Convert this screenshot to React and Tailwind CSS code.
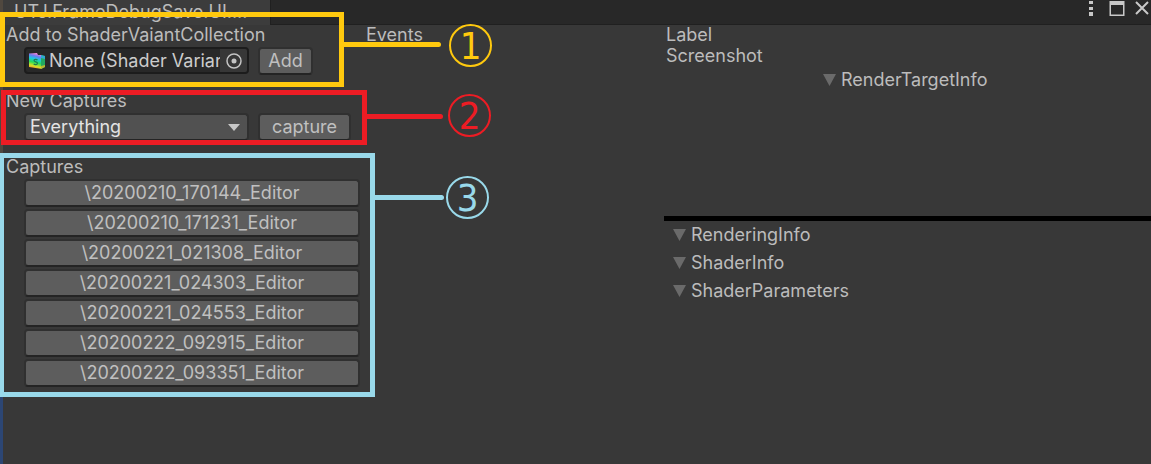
import { useState } from "react";

const captures = [
  "\\20200210_170144_Editor",
  "\\20200210_171231_Editor",
  "\\20200221_021308_Editor",
  "\\20200221_024303_Editor",
  "\\20200221_024553_Editor",
  "\\20200222_092915_Editor",
  "\\20200222_093351_Editor",
];

const buttonClass =
  "h-7 rounded border-2 border-[#303030] border-b-[#242424] bg-[#5d5d5d] text-center leading-6 text-[#c0c0c0] hover:bg-[#676767]";

function Foldout({ title, className = "" }) {
  const [open, setOpen] = useState(true);
  return (
    <button
      type="button"
      aria-expanded={open}
      onClick={() => setOpen(!open)}
      className={`flex h-5 items-center gap-[5px] ${className}`}
    >
      <svg
        viewBox="0 0 13 12"
        className={`h-3 w-[13px] fill-[#6a6a6a] ${open ? "" : "-rotate-90"}`}
        aria-hidden="true"
      >
        <path d="M0 0h13L6.5 12z" />
      </svg>
      {title}
    </button>
  );
}

function ShaderVariantIcon() {
  return (
    <svg viewBox="0 0 16 16" className="h-4 w-4 shrink-0" aria-hidden="true">
      <defs>
        <linearGradient id="spectrum" x1="0.6" y1="0" x2="0.4" y2="1">
          <stop offset="0.05" stopColor="#e884d8" />
          <stop offset="0.2" stopColor="#6b7cf0" />
          <stop offset="0.38" stopColor="#1cc8e0" />
          <stop offset="0.6" stopColor="#26dc58" />
          <stop offset="0.82" stopColor="#d8e028" />
          <stop offset="1" stopColor="#f08a28" />
        </linearGradient>
      </defs>
      <path d="M0 0.500l8-0.500 1 2 4 0v14l-13-2z" fill="url(#spectrum)" />
      <path d="M12 2l4 1v11l-4 2z" fill="#22a860" />
      <path d="M12 2l4 1v3l-4-1z" fill="#30a8d0" />
      <path d="M12 13l4-1v2l-4 2z" fill="#b8b830" />
      <path
        d="M8.500 7C7.500 6 5 6 5 7.500S8.500 8.700 8.500 10.200 6 12 4.700 11"
        fill="none"
        stroke="#1c8050"
        strokeWidth="1.200"
      />
    </svg>
  );
}

function Header() {
  return (
    <header className="flex h-[25px] justify-between border-b border-[#202020] bg-[#282828] pl-[3px]">
      <div className="-mb-px flex w-[268px] border-r border-[#202020] bg-[#3c3c3c] pl-[11px] leading-6">
        UTJ.FrameDebugSave.UI....
      </div>
      <div className="flex h-4 items-center text-[#c8c8c8]">
        <button type="button" aria-label="Menu" className="mr-4">
          <svg viewBox="0 0 4 16" className="h-4 w-1 fill-current">
            <path d="M0 1h4v3H0zM0 7h4v3H0zM0 12h4v4H0z" />
          </svg>
        </button>
        <button type="button" aria-label="Maximize" className="mr-[10px]">
          <svg viewBox="0 0 16 16" className="h-4 w-4 fill-current">
            <path fillRule="evenodd" d="M0.500 1h15v15h-15zM2 5v9.500h12V5z" />
          </svg>
        </button>
        <button type="button" aria-label="Close" className="mr-[2px]">
          <svg viewBox="0 0 14 16" className="h-4 w-[14px] stroke-current">
            <path d="M1 2l12 12M13 2L1 14" fill="none" strokeWidth="2" />
          </svg>
        </button>
      </div>
    </header>
  );
}

function Callout({ number, box, line, badge }) {
  return (
    <>
      <div className={`absolute border-[5px] border-current ${box}`} />
      <div className={`absolute h-[5px] rounded-r-sm bg-current ${line}`} />
      <div
        className={`absolute flex size-[43px] items-center justify-center rounded-full border-2 border-current font-['DejaVu_Sans_Condensed','DejaVu_Sans',sans-serif] text-[38px] leading-none ${badge}`}
      >
        {number}
      </div>
    </>
  );
}

export default function App() {
  return (
    <div className="relative flex min-h-screen flex-col overflow-hidden bg-[#383838] font-[Inter,sans-serif] text-lg leading-5 text-[#bcbcbc]">
      <Header />
      <div className="absolute top-0 left-0 h-full w-[3px] bg-linear-to-b from-[#50483f] from-85% to-[#2c4674] to-85%" />

      <main className="grid flex-1 grid-cols-[360px_304px_1fr]">
        <div className="flex flex-col gap-[17px] pl-[6px]">
          <section className="flex flex-col gap-[2px]">
            <label htmlFor="collection" className="whitespace-nowrap">
              Add to ShaderVaiantCollection
            </label>
            <div className="flex h-[27px] gap-[9px] pl-[18px]">
              <div className="flex w-[225px] items-center overflow-hidden rounded border-2 border-[#1c1c1c] bg-[#282828] pl-[3px]">
                <ShaderVariantIcon />
                <input
                  id="collection"
                  readOnly
                  value="None (Shader Variant Collection)"
                  className="ml-1 h-full min-w-0 flex-1 bg-transparent text-[#cccccc] outline-none"
                />
                <button
                  type="button"
                  aria-label="Select collection"
                  className="flex h-full w-[27px] items-center justify-center bg-[#373737]"
                >
                  <svg viewBox="0 0 16 16" className="h-4 w-4">
                    <circle cx="8" cy="8" r="7" fill="none" stroke="#c4c4c4" strokeWidth="1.500" />
                    <circle cx="8" cy="8" r="2.500" fill="#c4c4c4" />
                  </svg>
                </button>
              </div>
              <button type="button" className={`${buttonClass} w-[55px]`}>
                Add
              </button>
            </div>
          </section>

          <section className="flex flex-col gap-[2px]">
            <label htmlFor="capture-type">New Captures</label>
            <div className="flex h-[27px] gap-[9px] pl-[18px]">
              <div className="relative w-[225px]">
                <select
                  id="capture-type"
                  className="h-7 w-full appearance-none rounded border-2 border-[#303030] border-b-[#242424] bg-[#515151] pl-1 text-[#e4e4e4]"
                >
                  <option>Everything</option>
                </select>
                <svg
                  viewBox="0 0 12 7"
                  className="pointer-events-none absolute top-[11px] right-[9px] h-[7px] w-3 fill-[#c8c8c8]"
                  aria-hidden="true"
                >
                  <path d="M0 0h12L6 7z" />
                </svg>
              </div>
              <button type="button" className={`${buttonClass} w-[93px]`}>
                capture
              </button>
            </div>
          </section>

          <section>
            <h2>Captures</h2>
            <ul className="mt-[2px] flex flex-col gap-[2px] pl-[18px]">
              {captures.map((name) => (
                <li key={name} className="flex">
                  <button type="button" className={`${buttonClass} flex-1`}>
                    {name}
                  </button>
                </li>
              ))}
            </ul>
          </section>
        </div>

        <section className="pl-[6px]">
          <h2>Events</h2>
        </section>

        <div className="flex min-w-0 flex-col">
          <section className="flex h-[191px] flex-col pl-[2px]">
            <h2>Label</h2>
            <h2 className="mt-px">Screenshot</h2>
            <Foldout title="RenderTargetInfo" className="mt-1 ml-[157px]" />
          </section>
          <div className="h-[5px] bg-black" />
          <div className="flex flex-col items-start gap-2 pt-1 pl-[9px]">
            <Foldout title="RenderingInfo" />
            <Foldout title="ShaderInfo" />
            <Foldout title="ShaderParameters" />
          </div>
        </div>
      </main>

      <div className="pointer-events-none">
        <div className="text-[#ffc90e]">
          <Callout
            number="1"
            box="left-0 top-3 h-[75px] w-[344px]"
            line="left-[344px] top-[42px] w-[97px]"
            badge="left-[449px] top-6"
          />
        </div>
        <div className="text-[#ed1c24]">
          <Callout
            number="2"
            box="left-px top-[90px] h-[55px] w-[366px]"
            line="left-[367px] top-[114px] w-[76px]"
            badge="left-[448px] top-[94px]"
          />
        </div>
        <div className="text-[#99d9ea]">
          <Callout
            number="3"
            box="-left-px top-[153px] h-[244px] w-[376px]"
            line="left-[375px] top-[195px] w-[69px]"
            badge="left-[446px] top-[176px]"
          />
        </div>
      </div>
    </div>
  );
}
